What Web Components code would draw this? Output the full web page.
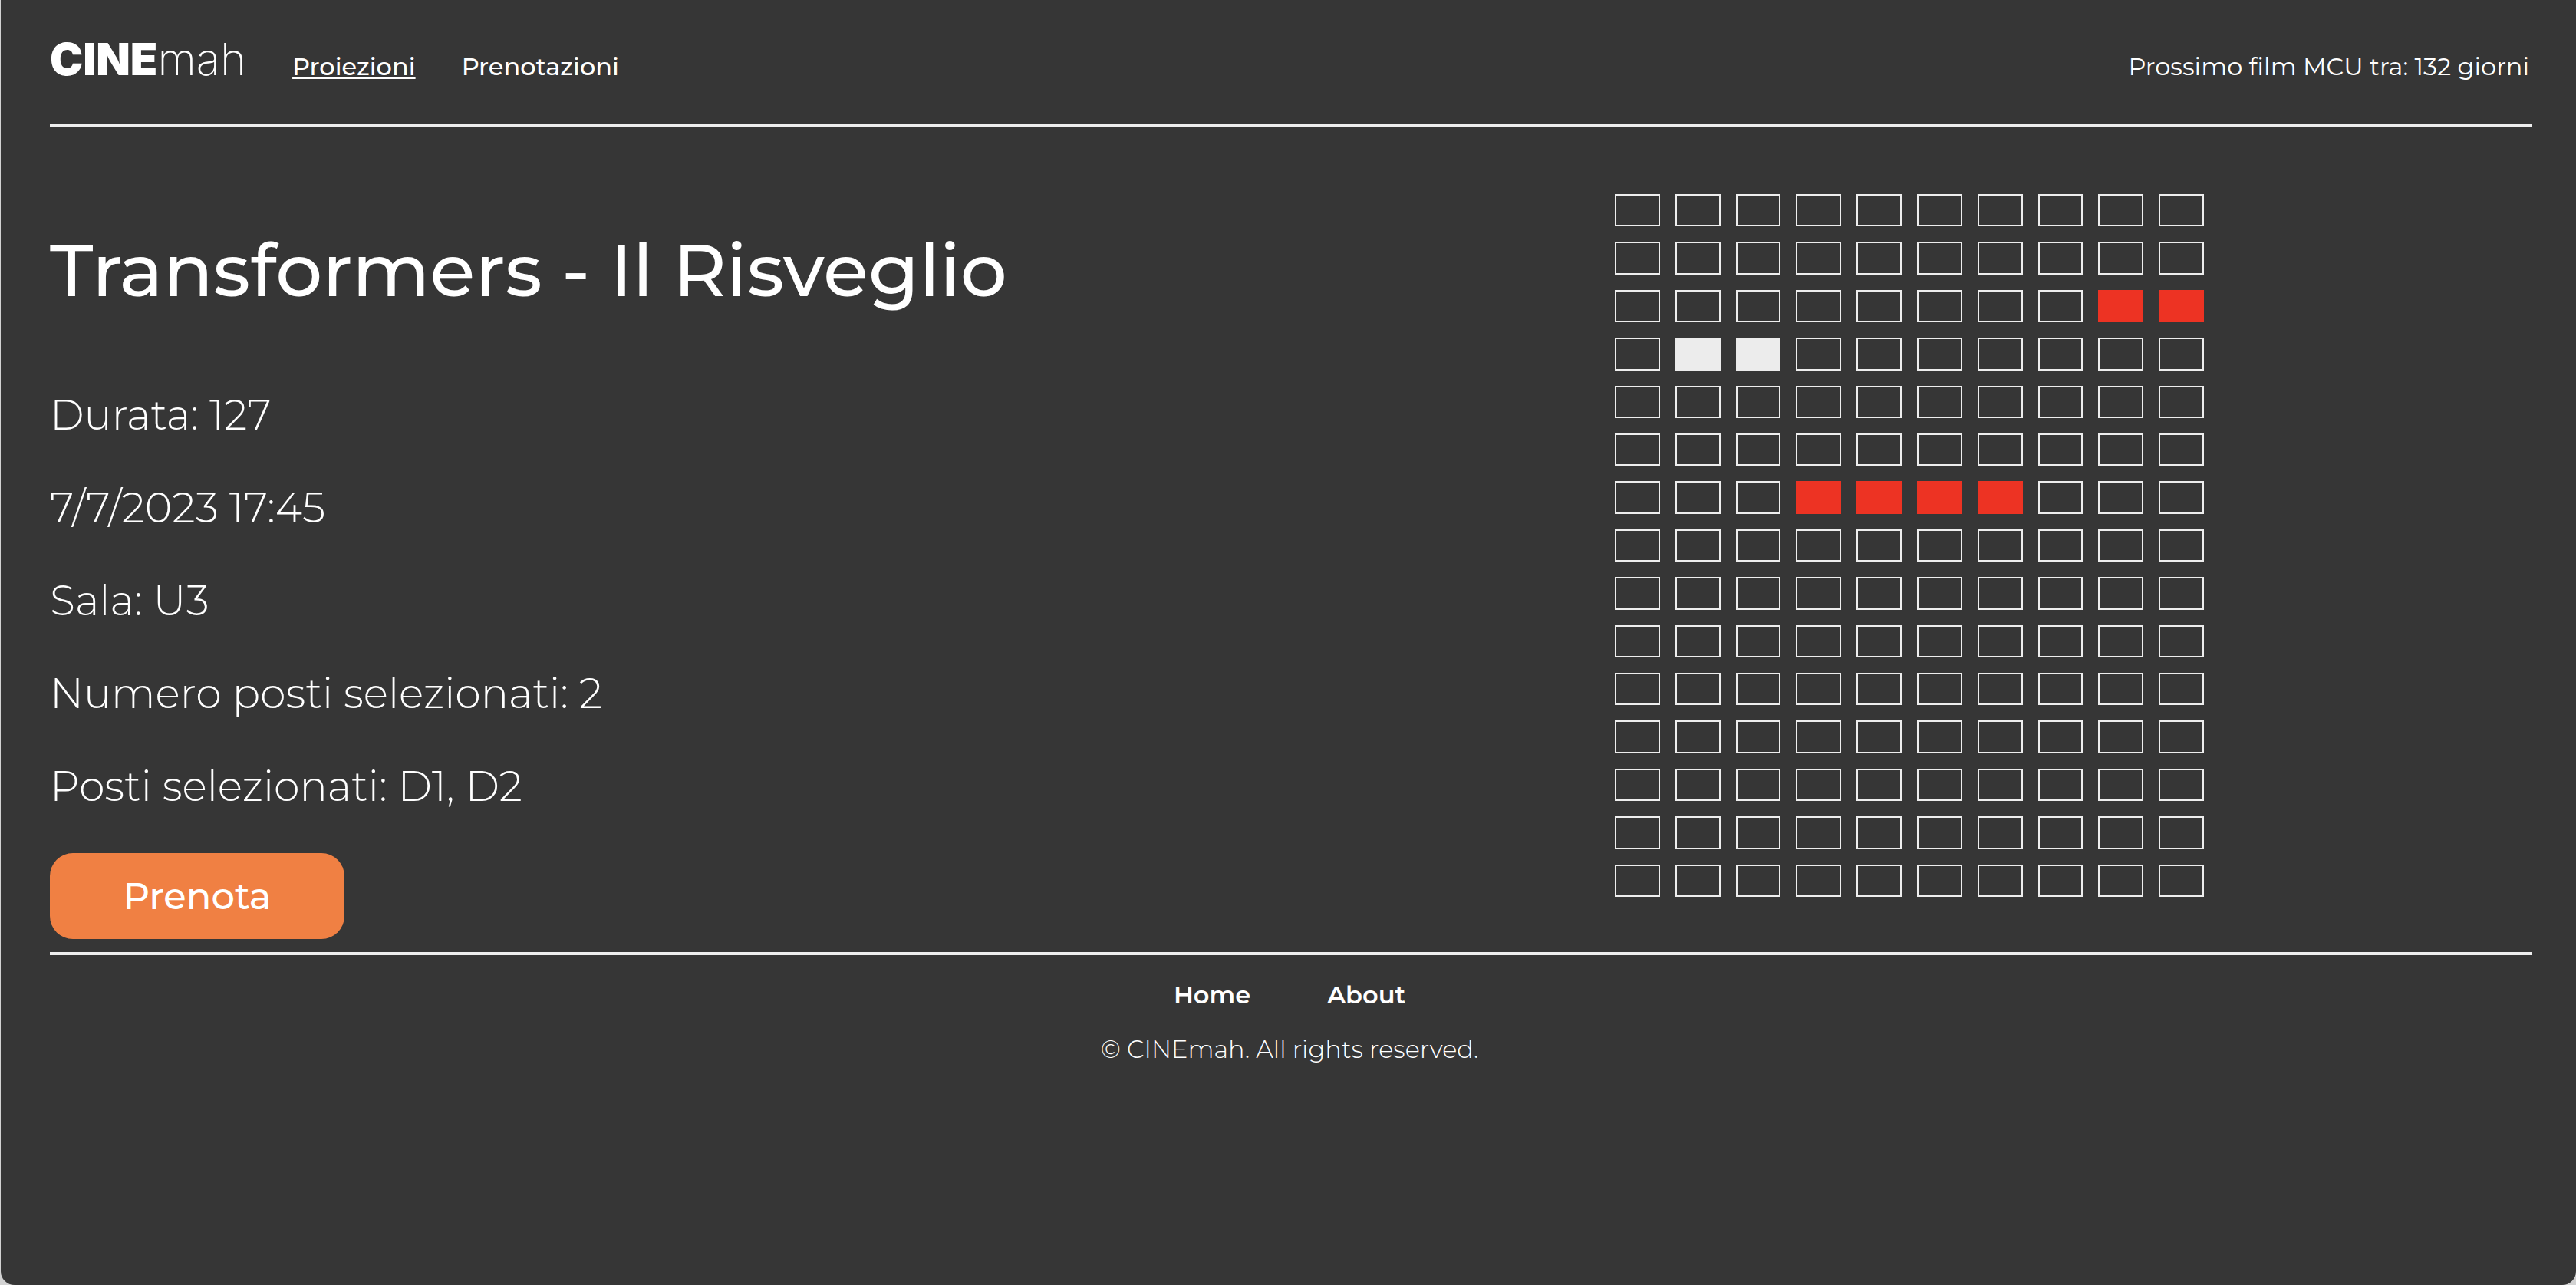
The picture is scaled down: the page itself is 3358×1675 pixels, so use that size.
<!DOCTYPE html>
<html lang="it">
<head>
<meta charset="utf-8">
<title>CINEmah</title>
<style>
html { background: #d2d2d2; }
body { margin: 0; min-height: 100vh; display: flex; font-family: Montserrat, "Open Sans", sans-serif; font-size: 32px; line-height: 39px; color: #fff; }
cinema-app { flex: 1; }
</style>
</head>
<body>
<cinema-app></cinema-app>
<script>
const define = (name, html, setup) => {
  const template = document.createElement('template');
  template.innerHTML = html;
  customElements.define(name, class extends HTMLElement {
    constructor() {
      super();
      this.attachShadow({ mode: 'open' }).append(template.content.cloneNode(true));
    }
    connectedCallback() { if (setup) setup(this, this.shadowRoot); }
  });
};

define('cinema-logo', `
<style>
  :host { display: block; font-family: Inter, sans-serif; font-size: 58px; line-height: 72px; }
  a { color: inherit; text-decoration: none; font-weight: 200; }
  b { font-weight: 900; }
</style>
<a href="#"><b>CINE</b>mah</a>`);

define('cinema-link', `
<style>
  :host { display: block; }
  a { color: inherit; text-decoration: none; font-weight: var(--link-weight, 600); }
  :host([active]) a { text-decoration: underline; }
</style>
<a href="#"><slot></slot></a>`);

define('cinema-header', `
<style>
  :host { display: block; border-bottom: 4px solid #eee; --link-weight: 500; }
  header { display: flex; align-items: baseline; height: 161px; box-sizing: border-box; padding: 41px 4px 0 0; }
  nav { display: flex; gap: 60px; margin-left: 60px; }
  p { margin: 0 0 0 auto; font-weight: 400; }
</style>
<header>
  <cinema-logo></cinema-logo>
  <nav>
    <cinema-link active>Proiezioni</cinema-link>
    <cinema-link>Prenotazioni</cinema-link>
  </nav>
  <p>Prossimo film MCU tra: 132 giorni</p>
</header>`);

define('screening-details', `
<style>
  :host { display: block; }
  h1 { margin: 127px 0 95px; font-size: 96px; line-height: 120px; font-weight: 500; }
  p { margin: 0 0 53px; font-size: 54px; line-height: 68px; font-weight: 300; }
  button { display: block; width: 384px; height: 112px; padding: 0; border: 0; border-radius: 30px;
    background: #f08043; color: #fff; font: 500 48px/60px Montserrat, "Open Sans", sans-serif; }
</style>
<h1>Transformers - Il Risveglio</h1>
<p>Durata: 127</p>
<p>7/7/2023 17:45</p>
<p>Sala: U3</p>
<p>Numero posti selezionati: 2</p>
<p>Posti selezionati: D1, D2</p>
<button type="button">Prenota</button>`);

define('seat-map', `
<style>
  :host { display: block; }
  div { display: grid; grid-template-columns: repeat(10, 1fr); grid-auto-rows: 1fr; gap: 20px;
    width: 768px; height: 916px; margin: 88px auto 0; }
  input { appearance: none; margin: 0; border: 2px solid #eee; border-radius: 0; min-width: 0; min-height: 0; }
  input:checked { background: #ececec; border-color: #ececec; }
  input:disabled { background: #ed3323; border-color: #ed3323; }
</style>
<div role="group" aria-label="Posti"></div>`, (host, root) => {
  const taken = host.getAttribute('taken').split(' ');
  const selected = host.getAttribute('selected').split(' ');
  const grid = root.querySelector('div');
  for (const row of 'ABCDEFGHIJKLMNO') {
    for (let n = 0; n < 10; n++) {
      const seat = document.createElement('input');
      seat.type = 'checkbox';
      seat.ariaLabel = row + n;
      seat.checked = selected.includes(row + n);
      seat.disabled = taken.includes(row + n);
      grid.append(seat);
    }
  }
});

define('cinema-footer', `
<style>
  :host { display: block; border-top: 4px solid #eee; text-align: center; }
  footer { padding-right: 4px; }
  nav { display: flex; justify-content: center; gap: 100px; margin: 32px 0; }
  p { margin: 0; font-weight: 300; }
</style>
<footer>
  <nav>
    <cinema-link>Home</cinema-link>
    <cinema-link>About</cinema-link>
  </nav>
  <p>© CINEmah. All rights reserved.</p>
</footer>`);

define('cinema-app', `
<style>
  :host { display: block; margin-left: 1px; padding: 0 57px 0 64px; background: #363636; border-radius: 0 0 18px 18px; }
  main { display: grid; grid-template-columns: 1fr 1fr; padding: 0 4px 17px 0; }
</style>
<cinema-header></cinema-header>
<main>
  <screening-details></screening-details>
  <seat-map selected="D1 D2" taken="C8 C9 G3 G4 G5 G6"></seat-map>
</main>
<cinema-footer></cinema-footer>`);
</script>
</body>
</html>
